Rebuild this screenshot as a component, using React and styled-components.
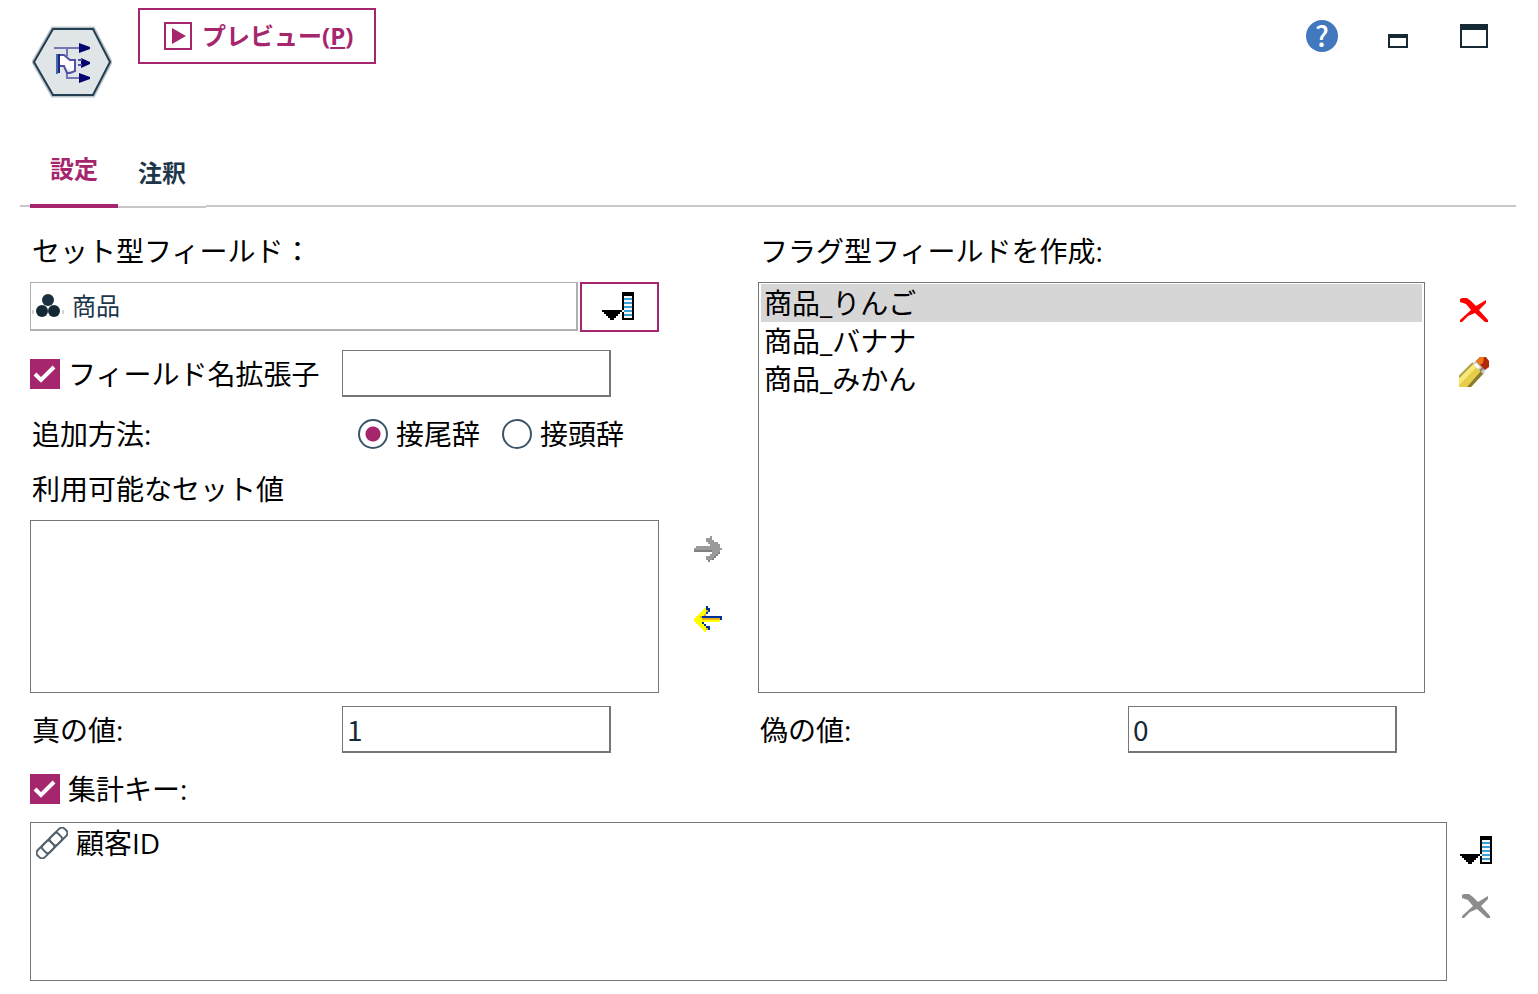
import React, { useState } from "react";
import styled, { createGlobalStyle } from "styled-components";

const PIXEL_COLORS = {
  y: "#ffff00",
  o: "#e8b020",
  b: "#00309c",
  g: "#9a9a9a",
  d: "#808080",
};

const LEFT_ARROW = [
  "......b.......",
  ".....ybb......",
  "....yyob......",
  "...yyyb.......",
  "..yyyo........",
  ".yyobbbbbbbbbb",
  "yyyyooooooooob",
  "yyyyyyyyyyyyy.",
  ".yyyb.........",
  "..yyyb........",
  "...yyybb......",
  "....yyob......",
  ".....y........",
];

const RIGHT_ARROW = [
  "........g.....",
  "......ggg.....",
  "......gggg....",
  ".......ggggg..",
  "........ggggg.",
  ".gggggggggggg.",
  "gggggggggggggg",
  "dddddddddgggg.",
  ".........gggd.",
  "........gggd..",
  "......ggggd...",
  "......gggd....",
  ".......d......",
];

const CREATED_FIELDS = [
  { id: "apple", title: "商品_りんご" },
  { id: "banana", title: "商品_バナナ" },
  { id: "orange", title: "商品_みかん" },
];

const PixelIcon = ({ rows }) => (
  <svg width="28" height="26" viewBox="0 0 14 13" shapeRendering="crispEdges" aria-hidden="true">
    {rows.map((row, y) =>
      [...row].map((cell, x) =>
        cell === "." ? null : (
          <rect key={`${x}-${y}`} x={x} y={y} width="1" height="1" fill={PIXEL_COLORS[cell]} />
        )
      )
    )}
  </svg>
);

const NodeIcon = () => (
  <svg width="80" height="72" viewBox="0 0 80 72" aria-hidden="true">
    <path d="M21 3H61L78 36L61 69H21L2 36Z" fill="#e0e5e8" stroke="#b9c3c9" strokeWidth="5" />
    <path d="M21 3H61L78 36L61 69H21L2 36Z" fill="#e0e5e8" stroke="#233e50" strokeWidth="2" />
    <path d="M22 22H50M35 22V30M35 46V52H50" fill="none" stroke="#7676b4" strokeWidth="2" />
    <path d="M28 30H34L38 35H43V45H39L34 42L28 38Z" fill="#fff" />
    <path d="M26 29H32L38 34H43V45L38 47H35L32 40H28" fill="none" stroke="#5252a4" strokeWidth="2" />
    <path d="M25 28V48" stroke="#3d6fae" strokeWidth="2" />
    <path d="M27 28V47" stroke="#26267e" strokeWidth="2" />
    <path d="M47 17L58 21V23L47 27ZM49 32L58 36V38L49 42ZM47 47L58 51V53L47 57Z" fill="#06066e" />
    <path d="M46 34H50M46 39H50" stroke="#5252a4" strokeWidth="2" />
  </svg>
);

const PlayIcon = () => (
  <svg width="28" height="28" viewBox="0 0 28 28" aria-hidden="true">
    <rect x="1" y="1" width="26" height="26" fill="none" stroke="#a6266e" strokeWidth="2" />
    <path d="M8 6L22 14L8 22Z" fill="#a6266e" />
  </svg>
);

const MinimizeIcon = () => (
  <svg width="28" height="24" viewBox="0 0 28 24" shapeRendering="crispEdges" aria-hidden="true">
    <path d="M4 10H24V24H4ZM6 14V22H22V14Z" fill="#152935" fillRule="evenodd" />
  </svg>
);

const MaximizeIcon = () => (
  <svg width="28" height="24" viewBox="0 0 28 24" shapeRendering="crispEdges" aria-hidden="true">
    <path d="M0 0H28V24H0ZM2 6V22H26V6Z" fill="#152935" fillRule="evenodd" />
  </svg>
);

const PickerIcon = () => (
  <svg width="32" height="28" viewBox="0 0 16 14" shapeRendering="crispEdges" aria-hidden="true">
    <path d="M0 9H10V10H9V11H8V12H7V13H6V14H4V13H3V12H2V11H1V10H0Z" fill="#000" />
    <path d="M10 0H16V14H10V10H11V9H10Z" fill="#000" />
    <rect x="11" y="2" width="4" height="11" fill="#f4f8fa" />
    <path d="M11 3H15V4H11ZM11 5H15V6H11ZM11 7H15V8H11ZM11 9H15V10H11ZM11 11H15V12H11Z" fill="#3a9fd4" />
  </svg>
);

const CrossIcon = ({ color }) => (
  <svg width="28" height="24" viewBox="0 0 28 24" aria-hidden="true">
    <path
      d="M0 1L2 0H7L11 3L16 8L21 5L26 2V5L19 12L28 22V24H25L15 15L8 18L2 24H0V22L11 12L6 6L0 4Z"
      fill={color}
    />
  </svg>
);

const PencilIcon = () => (
  <svg width="30" height="30" viewBox="0 0 30 30" aria-hidden="true">
    <path d="M0 20L14 6L25 16L12 30H0Z" fill="#e6cc48" />
    <path d="M0 20L14 6L18 10L0 28Z" fill="#f8e878" />
    <path d="M0 20L14 6" stroke="#b0a050" strokeWidth="2" />
    <path d="M25 16L12 30H8L22 14Z" fill="#8a7a30" />
    <path d="M14 6L18 3L27 12L24 17Z" fill="#c8c8c8" />
    <path d="M16 7L20 11" stroke="#fff" strokeWidth="3" />
    <path d="M21 14L25 10" stroke="#808080" strokeWidth="2" />
    <path d="M17 4L21 0H27L30 4V10L26 13Z" fill="#b02a08" />
    <path d="M17 4L21 0H25L24 6L21 8Z" fill="#f07818" />
  </svg>
);

const NominalIcon = () => (
  <svg width="32" height="24" viewBox="0 0 32 24" aria-hidden="true">
    <path d="M0 16h2v4H0zM30 16h2v4h-2z" fill="#d0d4d7" />
    <circle cx="16" cy="6" r="6" fill="#1b303e" />
    <circle cx="10" cy="17" r="6" fill="#152935" />
    <circle cx="22" cy="17" r="6" fill="#152935" />
  </svg>
);

const TypelessIcon = () => (
  <svg width="32" height="32" viewBox="0 0 32 32" aria-hidden="true">
    <g transform="rotate(-45 16 16)" fill="none" stroke="#52636f" strokeWidth="2">
      <rect x="-3" y="11" width="38" height="10" rx="4" />
      <rect x="5" y="11" width="11" height="10" rx="3" />
      <rect x="16" y="11" width="11" height="10" rx="3" />
    </g>
  </svg>
);

const App = () => {
  const [tab, setTab] = useState("settings");
  const [useExtension, setUseExtension] = useState(true);
  const [useKey, setUseKey] = useState(true);
  const [position, setPosition] = useState("suffix");
  const [selected, setSelected] = useState("apple");

  return (
    <Page>
      <GlobalStyle />
      <Header>
        <NodeHolder>
          <NodeIcon />
        </NodeHolder>
        <PreviewButton type="button">
          <PlayIcon />
          <span>
            プレビュー(<u>P</u>)
          </span>
        </PreviewButton>
        <WindowButtons>
          <WindowButton type="button" aria-label="ヘルプ">
            <HelpBadge>?</HelpBadge>
          </WindowButton>
          <WindowButton type="button" aria-label="最小化">
            <MinimizeIcon />
          </WindowButton>
          <WindowButton type="button" aria-label="最大化">
            <MaximizeIcon />
          </WindowButton>
        </WindowButtons>
      </Header>

      <Tabs role="tablist">
        <Tab
          type="button"
          role="tab"
          aria-selected={tab === "settings"}
          $active={tab === "settings"}
          onClick={() => setTab("settings")}
        >
          設定
        </Tab>
        <Tab
          type="button"
          role="tab"
          aria-selected={tab === "notes"}
          $active={tab === "notes"}
          onClick={() => setTab("notes")}
        >
          注釈
        </Tab>
      </Tabs>

      <Form onSubmit={(e) => e.preventDefault()}>
        <Columns>
          <Panel>
            <Label htmlFor="setField">セット型フィールド：</Label>
            <FieldPicker>
              <FieldBox>
                <NominalIcon />
                <FieldInput id="setField" defaultValue="商品" readOnly />
              </FieldBox>
              <PickerButton type="button" aria-label="フィールドの選択">
                <PickerIcon />
              </PickerButton>
            </FieldPicker>
            <Row>
              <CheckLabel>
                <Checkbox
                  type="checkbox"
                  checked={useExtension}
                  onChange={(e) => setUseExtension(e.target.checked)}
                />
                フィールド名拡張子
              </CheckLabel>
              <TextInput type="text" aria-label="フィールド名拡張子" />
            </Row>
            <RadioRow role="radiogroup" aria-labelledby="positionLabel">
              <RowLabel as="span" id="positionLabel" $width="328px">
                追加方法:
              </RowLabel>
              <RadioLabel>
                <Radio
                  type="radio"
                  name="position"
                  checked={position === "suffix"}
                  onChange={() => setPosition("suffix")}
                />
                接尾辞
              </RadioLabel>
              <RadioLabel>
                <Radio
                  type="radio"
                  name="position"
                  checked={position === "prefix"}
                  onChange={() => setPosition("prefix")}
                />
                接頭辞
              </RadioLabel>
            </RadioRow>
            <Label as="span" id="availableLabel">
              利用可能なセット値
            </Label>
            <ListBox role="listbox" aria-labelledby="availableLabel" $height="173px" />
          </Panel>

          <MoveButtons>
            <MoveButton type="button" aria-label="追加" disabled>
              <PixelIcon rows={RIGHT_ARROW} />
            </MoveButton>
            <MoveButton type="button" aria-label="戻す">
              <PixelIcon rows={LEFT_ARROW} />
            </MoveButton>
          </MoveButtons>

          <Panel>
            <Label as="span" id="createLabel">
              フラグ型フィールドを作成:
            </Label>
            <ListBox role="listbox" aria-labelledby="createLabel" $height="411px">
              {CREATED_FIELDS.map((field) => (
                <ListItem
                  key={field.id}
                  role="option"
                  aria-selected={selected === field.id}
                  $selected={selected === field.id}
                  onClick={() => setSelected(field.id)}
                >
                  {field.title}
                </ListItem>
              ))}
            </ListBox>
          </Panel>

          <EditButtons>
            <EditButton type="button" aria-label="削除">
              <CrossIcon color="#ff0000" />
            </EditButton>
            <EditButton type="button" aria-label="編集">
              <PencilIcon />
            </EditButton>
          </EditButtons>
        </Columns>

        <ValueColumns>
          <Row>
            <RowLabel htmlFor="trueValue" $width="312px">
              真の値:
            </RowLabel>
            <TextInput id="trueValue" type="text" defaultValue="1" />
          </Row>
          <span />
          <Row>
            <RowLabel htmlFor="falseValue" $width="370px">
              偽の値:
            </RowLabel>
            <TextInput id="falseValue" type="text" defaultValue="0" />
          </Row>
        </ValueColumns>

        <KeyRow>
          <CheckLabel>
            <Checkbox
              type="checkbox"
              checked={useKey}
              onChange={(e) => setUseKey(e.target.checked)}
            />
            <span id="keyLabel">集計キー:</span>
          </CheckLabel>
        </KeyRow>
        <KeyFields>
          <ListBox role="listbox" aria-labelledby="keyLabel" $height="159px">
            <ListItem role="option" aria-selected={false}>
              <TypelessIcon />
              顧客ID
            </ListItem>
          </ListBox>
          <KeyButtons>
            <IconButton type="button" aria-label="キーの選択">
              <PickerIcon />
            </IconButton>
            <IconButton type="button" aria-label="キーの削除" disabled>
              <CrossIcon color="#8c8c8c" />
            </IconButton>
          </KeyButtons>
        </KeyFields>
      </Form>
    </Page>
  );
};

export default App;

const GlobalStyle = createGlobalStyle`
  *,
  *::before,
  *::after {
    box-sizing: border-box;
  }

  body {
    margin: 0;
    background-color: white;
  }

  body, button, input {
    font-family: "Open Sans", "Noto Sans CJK JP", sans-serif;
  }

  svg {
    display: block;
    flex-shrink: 0;
  }
`;

const Page = styled.div`
  min-width: 1280px;
  color: black;
  font-size: 28px;
  line-height: 38px;
`;

const Header = styled.header`
  display: flex;
  align-items: flex-start;
  min-height: 140px;
  padding: 8px 26px 0 32px;
`;

const NodeHolder = styled.div`
  padding-top: 18px;
  margin-right: 26px;
`;

const PreviewButton = styled.button`
  display: flex;
  align-items: center;
  gap: 10px;
  height: 56px;
  padding: 0 21px 0 24px;
  border: 2px solid #a6266e;
  background-color: white;
  color: #a6266e;
  font-size: 24px;
  font-weight: 700;
  line-height: 38px;
  white-space: nowrap;
  cursor: pointer;
`;

const WindowButtons = styled.div`
  display: flex;
  margin-left: auto;
`;

const IconButton = styled.button`
  display: flex;
  align-items: center;
  justify-content: center;
  padding: 0;
  border: 0;
  background-color: transparent;
  cursor: pointer;
`;

const WindowButton = styled(IconButton)`
  width: 76px;
  height: 56px;
`;

const HelpBadge = styled.span`
  width: 32px;
  height: 32px;
  border-radius: 50%;
  background-color: #4178be;
  color: white;
  font-family: "Noto Sans CJK JP", sans-serif;
  font-size: 28px;
  font-weight: 500;
  line-height: 30px;
  text-align: center;
`;

const Tabs = styled.div`
  display: flex;
  align-items: flex-start;
  padding: 0 22px 0 20px;

  &::before,
  &::after {
    content: "";
    height: 67px;
    border-bottom: 2px solid #c8c8c8;
  }

  &::before {
    width: 10px;
  }

  &::after {
    flex: 1;
  }
`;

const Tab = styled.button`
  width: 88px;
  height: 68px;
  padding: ${({ $active }) => ($active ? "0 0 6px" : "0")};
  border: 0;
  border-bottom: ${({ $active }) => ($active ? "4px solid #a6266e" : "2px solid #c8c8c8")};
  background-color: transparent;
  color: ${({ $active }) => ($active ? "#a6266e" : "#1d3649")};
  font-size: 24px;
  font-weight: 700;
  line-height: 38px;
  cursor: pointer;
`;

const Form = styled.form`
  padding: 24px 22px 12px 30px;
`;

const Columns = styled.div`
  display: grid;
  grid-template-columns: 629fr 99px 667fr 91px;
`;

const ValueColumns = styled(Columns)`
  margin-top: 13px;
`;

const Panel = styled.div`
  display: flex;
  flex-direction: column;
  min-width: 0;
`;

const Label = styled.label`
  padding-left: 2px;
  margin-bottom: 12px;
`;

const FieldPicker = styled.div`
  display: flex;
  gap: 2px;
  margin-bottom: 18px;
`;

const FieldBox = styled.div`
  display: flex;
  align-items: center;
  flex: 1;
  height: 49px;
  padding-left: 1px;
  border: 1px solid #b0b0b0;
  border-width: 1px 2px 2px 1px;
`;

const FieldInput = styled.input`
  flex: 1;
  min-width: 0;
  padding: 0 8px;
  border: 0;
  outline: 0;
  background-color: transparent;
  color: #1d3649;
  font-size: 24px;
  line-height: 38px;
`;

const PickerButton = styled(IconButton)`
  width: 79px;
  height: 50px;
  padding: 0 4px 2px 0;
  border: 2px solid #a6266e;
`;

const Row = styled.div`
  display: flex;
  align-items: center;
`;

const RowLabel = styled.label`
  flex-shrink: 0;
  width: ${({ $width }) => $width};
  padding-left: 2px;
`;

const CheckLabel = styled.label`
  display: flex;
  align-items: center;
  gap: 8px;
  flex-shrink: 0;
  width: 312px;
`;

const Checkbox = styled.input`
  appearance: none;
  width: 30px;
  height: 30px;
  margin: 0;
  border: 2px solid #a6266e;

  &:checked {
    background: #a6266e
      url("data:image/svg+xml,%3Csvg xmlns='http://www.w3.org/2000/svg' viewBox='0 0 26 26'%3E%3Cpath d='M3 13L9 19L22 6' fill='none' stroke='white' stroke-width='4'/%3E%3C/svg%3E")
      center / 26px 26px no-repeat;
  }
`;

const TextInput = styled.input`
  width: 269px;
  height: 47px;
  padding: 0 4px;
  border: 1px solid #767676;
  border-width: 1px 2px 2px 1px;
  border-radius: 0;
  background-color: white;
  color: #152935;
  font-family: "Noto Sans CJK JP", sans-serif;
  font-size: 28px;
`;

const RadioRow = styled(Row)`
  height: 37px;
  margin: 18px 0;
`;

const RadioLabel = styled.label`
  display: flex;
  align-items: center;
  gap: 8px;
  margin-right: 22px;
`;

const Radio = styled.input`
  appearance: none;
  width: 30px;
  height: 30px;
  margin: 0;
  border: 2px solid #3c5468;
  border-radius: 50%;

  &:checked {
    background: radial-gradient(circle, #a6266e 7px, white 8px);
  }
`;

const ListBox = styled.ul`
  height: ${({ $height }) => $height};
  margin: 0;
  padding: 1px 2px;
  border: 1px solid #767676;
  list-style: none;
  overflow: auto;
`;

const ListItem = styled.li`
  display: flex;
  align-items: center;
  gap: 8px;
  padding-left: 3px;
  background-color: ${({ $selected }) => ($selected ? "#d6d6d6" : "transparent")};
`;

const MoveButtons = styled.div`
  display: flex;
  flex-direction: column;
  align-items: center;
  justify-content: flex-end;
  padding: 0 1px 39px 0;
`;

const MoveButton = styled(IconButton)`
  width: 70px;
  height: 70px;
`;

const EditButtons = styled.div`
  display: flex;
  flex-direction: column;
  padding: 47px 0 0 34px;
`;

const EditButton = styled(IconButton)`
  width: 30px;
  height: 62px;
`;

const KeyRow = styled.div`
  margin: 17px 0 14px;
`;

const KeyFields = styled.div`
  display: grid;
  grid-template-columns: 1fr 69px;
`;

const KeyButtons = styled.div`
  display: flex;
  flex-direction: column;
  align-items: center;
  justify-self: start;
  gap: 30px;
  padding: 14px 0 0 13px;
`;
